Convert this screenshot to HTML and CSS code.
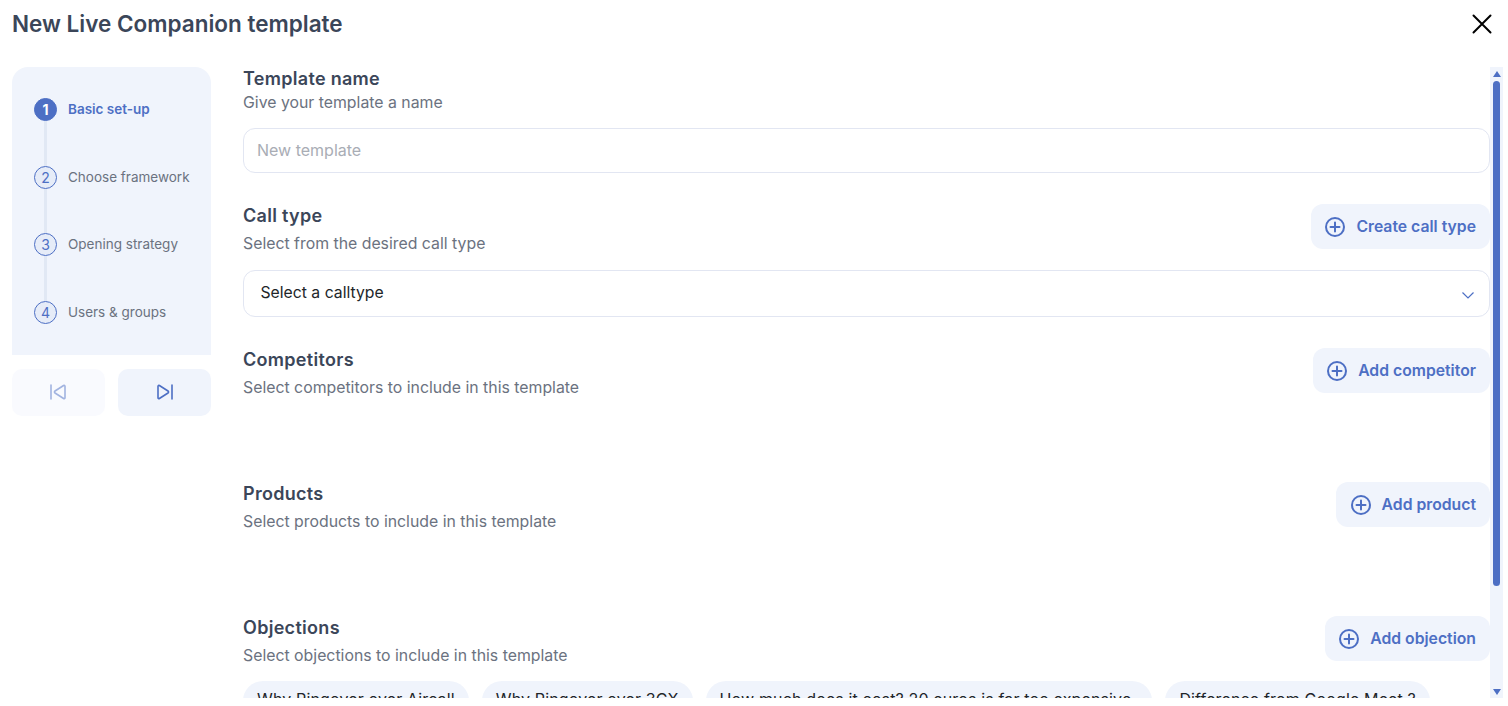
FILE: index.html
```html
<!DOCTYPE html>
<html lang="en">
<head>
<meta charset="utf-8">
<title>New Live Companion template</title>
<link rel="stylesheet" href="styles.css">
</head>
<body>
<div class="modal">
  <header class="modal-head">
    <h1 class="modal-title">New Live Companion template</h1>
    <button class="close" aria-label="Close">
      <svg width="24" height="24" viewBox="0 0 24 24" fill="none" stroke="#000" stroke-width="2" stroke-linecap="round"><path d="M3.5 3.5l17 17M20.5 3.5l-17 17"/></svg>
    </button>
  </header>
  <div class="modal-body">
    <aside class="side">
      <ol class="steps">
        <li class="step active"><span class="num">1</span><span class="label">Basic set-up</span></li>
        <li class="step"><span class="num">2</span><span class="label">Choose framework</span></li>
        <li class="step"><span class="num">3</span><span class="label">Opening strategy</span></li>
        <li class="step last"><span class="num">4</span><span class="label">Users &amp; groups</span></li>
      </ol>
      <div class="nav">
        <button class="nav-btn disabled" aria-label="Previous">
          <svg width="20" height="20" viewBox="0 0 20 20" fill="none" stroke="#4d6fc4" stroke-width="1.6" stroke-linejoin="round" stroke-linecap="round"><path d="M3 3v14M17 4.300v11.400c0 .8-.8 1.200-1.400.8L7 11a1.200 1.200 0 0 1 0-2l8.600-5.500c.6-.4 1.400 0 1.400.8z"/></svg>
        </button>
        <button class="nav-btn" aria-label="Next">
          <svg width="20" height="20" viewBox="0 0 20 20" fill="none" stroke="#4d6fc4" stroke-width="1.6" stroke-linejoin="round" stroke-linecap="round"><path d="M17 3v14M3 4.300v11.400c0 .8.800 1.200 1.400.8L13 11a1.200 1.200 0 0 0 0-2L4.400 3.500C3.800 3.100 3 3.500 3 4.300z"/></svg>
        </button>
      </div>
    </aside>
    <main class="form">
      <section class="block name-block">
        <h2 class="heading">Template name</h2>
        <p class="sub">Give your template a name</p>
        <input class="text-input" type="text" placeholder="New template">
      </section>
      <section class="block call-block">
        <div class="row">
          <div><h2 class="heading">Call type</h2><p class="sub row-sub">Select from the desired call type</p></div>
          <button class="add"><svg class="plus" width="20" height="20" viewBox="0 0 20 20" fill="none" stroke="#4d6fc4" stroke-width="2" stroke-linecap="round"><circle cx="10" cy="10" r="9"/><path d="M10 5.500v9M5.500 10h9"/></svg>Create call type</button>
        </div>
        <div class="select"><span class="select-text">Select a calltype</span>
          <svg class="chev" width="12" height="7" viewBox="0 0 12 7" fill="none" stroke="#4d6fc4" stroke-width="1.200"><path d="M.5.500l5.500 5.500 5.500-5.500"/></svg>
        </div>
      </section>
      <section class="block comp-block">
        <div class="row">
          <div><h2 class="heading">Competitors</h2><p class="sub row-sub">Select competitors to include in this template</p></div>
          <button class="add"><svg class="plus" width="20" height="20" viewBox="0 0 20 20" fill="none" stroke="#4d6fc4" stroke-width="2" stroke-linecap="round"><circle cx="10" cy="10" r="9"/><path d="M10 5.500v9M5.500 10h9"/></svg>Add competitor</button>
        </div>
      </section>
      <section class="block comp-block">
        <div class="row">
          <div><h2 class="heading">Products</h2><p class="sub row-sub">Select products to include in this template</p></div>
          <button class="add"><svg class="plus" width="20" height="20" viewBox="0 0 20 20" fill="none" stroke="#4d6fc4" stroke-width="2" stroke-linecap="round"><circle cx="10" cy="10" r="9"/><path d="M10 5.500v9M5.500 10h9"/></svg>Add product</button>
        </div>
      </section>
      <section class="block">
        <div class="row">
          <div><h2 class="heading">Objections</h2><p class="sub row-sub">Select objections to include in this template</p></div>
          <button class="add"><svg class="plus" width="20" height="20" viewBox="0 0 20 20" fill="none" stroke="#4d6fc4" stroke-width="2" stroke-linecap="round"><circle cx="10" cy="10" r="9"/><path d="M10 5.500v9M5.500 10h9"/></svg>Add objection</button>
        </div>
        <div class="chips">
          <span class="chip">Why Pingover over Aircall</span>
          <span class="chip">Why Pingover over 3CX</span>
          <span class="chip chip-long">How much does it cost? 20 euros is far too expensive</span>
          <span class="chip">Difference from Google Meet ?</span>
        </div>
      </section>
    </main>
    <div class="scrollbar" aria-hidden="true">
      <span class="arrow up"></span>
      <span class="thumb"></span>
      <span class="arrow down"></span>
    </div>
  </div>
</div>
</body>
</html>
```
FILE: styles.css
```css
* { box-sizing: border-box; }
html, body { margin: 0; height: 100%; overflow: hidden; background: #fff; }
body { font-family: Inter, "Liberation Sans", sans-serif; color: #374151; }
button { font: inherit; border: 0; padding: 0; cursor: pointer; }
h1, h2, p, ol { margin: 0; padding: 0; }

.modal { height: 706px; padding: 0 5px 8px 12px; display: flex; flex-direction: column; }
.modal-head { height: 67px; flex: none; display: flex; justify-content: space-between; padding-top: 9px; align-items: flex-start; }
.modal-title { font-size: 22.500px; line-height: 30px; font-weight: 600; color: #3b4659; }
.close { background: none; width: 24px; height: 24px; margin-top: 3px; margin-right: 9px; display: block; }
.close svg { display: block; }

.modal-body { flex: 1; min-height: 0; display: flex; }

.side { width: 199px; flex: none; margin-right: 32px; }
.steps { list-style: none; background: #f0f4fc; border-radius: 16px 16px 0 0; height: 288px; padding: 31px 0 0 22px; }
.step { display: flex; gap: 11px; height: 67.500px; align-items: flex-start; position: relative; }
.step:not(.last)::after { content: ""; position: absolute; left: 10px; top: 23px; width: 3px; height: 45px; background: #e1e8f4; }
.num { width: 23px; height: 23px; flex: none; border-radius: 50%; border: 1px solid #4d6fc4; background: #e6ecf8; color: #4d6fc4; font-size: 14px; line-height: 21px; text-align: center; }
.label { font-size: 13.500px; line-height: 23px; margin-top: .4px; color: #6b7280; }
.active .num { background: #4d6fc4; color: #fff; font-weight: 700; }
.active .label { color: #4d6fc4; font-weight: 600; }
.nav { display: flex; justify-content: space-between; margin-top: 14px; }
.nav-btn { width: 93px; height: 47px; padding-bottom: 1px; border-radius: 10px; background: #f0f4fc; display: flex; align-items: center; justify-content: center; }
.nav-btn.disabled { background: #f9fafe; padding-right: 1px; }
.nav-btn.disabled svg { opacity: .5; }

.form { flex: 1; min-width: 0; overflow: hidden; }
.block { display: block; }
.heading { font-size: 18px; line-height: 24px; font-weight: 600; letter-spacing: .3px; color: #3b4659; }
.sub { font-size: 15.830px; line-height: 22px; margin-top: 1px; color: #6b7280; }
.row-sub { margin-top: 5px; }
.name-block { padding-bottom: 31px; }
.text-input { display: block; width: 100%; height: 45px; margin-top: 14px; border: 1px solid #e2e6f2; border-radius: 12px; padding: 0 13px 2px; font: inherit; font-size: 16px; color: #374151; outline: 0; background: #fff; }
.text-input::placeholder { color: #a9adb5; opacity: 1; }
.row { display: flex; justify-content: space-between; align-items: flex-start; }
.add { height: 45px; padding: 0 14px 0 14.600px; display: flex; align-items: center; gap: 11px; background: #f0f4fc; color: #4d6fc4; font-size: 15.750px; font-weight: 600; border-radius: 12px; white-space: nowrap; }
.plus { flex: none; }
.call-block { padding-bottom: 31px; }
.select { height: 47px; margin-top: 15px; border: 1px solid #e2e6f2; border-radius: 12px; padding: 0 15px 0 16.500px; display: flex; align-items: center; justify-content: space-between; font-size: 15.750px; color: #212529; }
.select-text { margin-bottom: 3px; }
.chev { margin-top: 3px; }
.comp-block { height: 134px; }
.chips { display: flex; gap: 13px; margin-top: 14px; }
.chip { height: 40px; padding: 0 14px; border-radius: 20px; background: #f0f4fc; font-size: 16px; letter-spacing: .14px; line-height: 36px; color: #212529; white-space: nowrap; }
.chip-long { padding-right: 21px; }

.scrollbar { width: 13px; flex: none; background: #f0f4fc; display: flex; flex-direction: column; align-items: center; }
.arrow { width: 0; height: 0; border-left: 4.500px solid transparent; border-right: 4.500px solid transparent; flex: none; }
.arrow.up { border-bottom: 6px solid #4d6fc4; margin-top: 4px; }
.arrow.down { border-top: 6px solid #4d6fc4; margin-top: auto; margin-bottom: 3px; }
.thumb { width: 7px; height: 505px; border-radius: 4px; background: #4d6fc4; margin-top: 4px; flex: none; }
```
